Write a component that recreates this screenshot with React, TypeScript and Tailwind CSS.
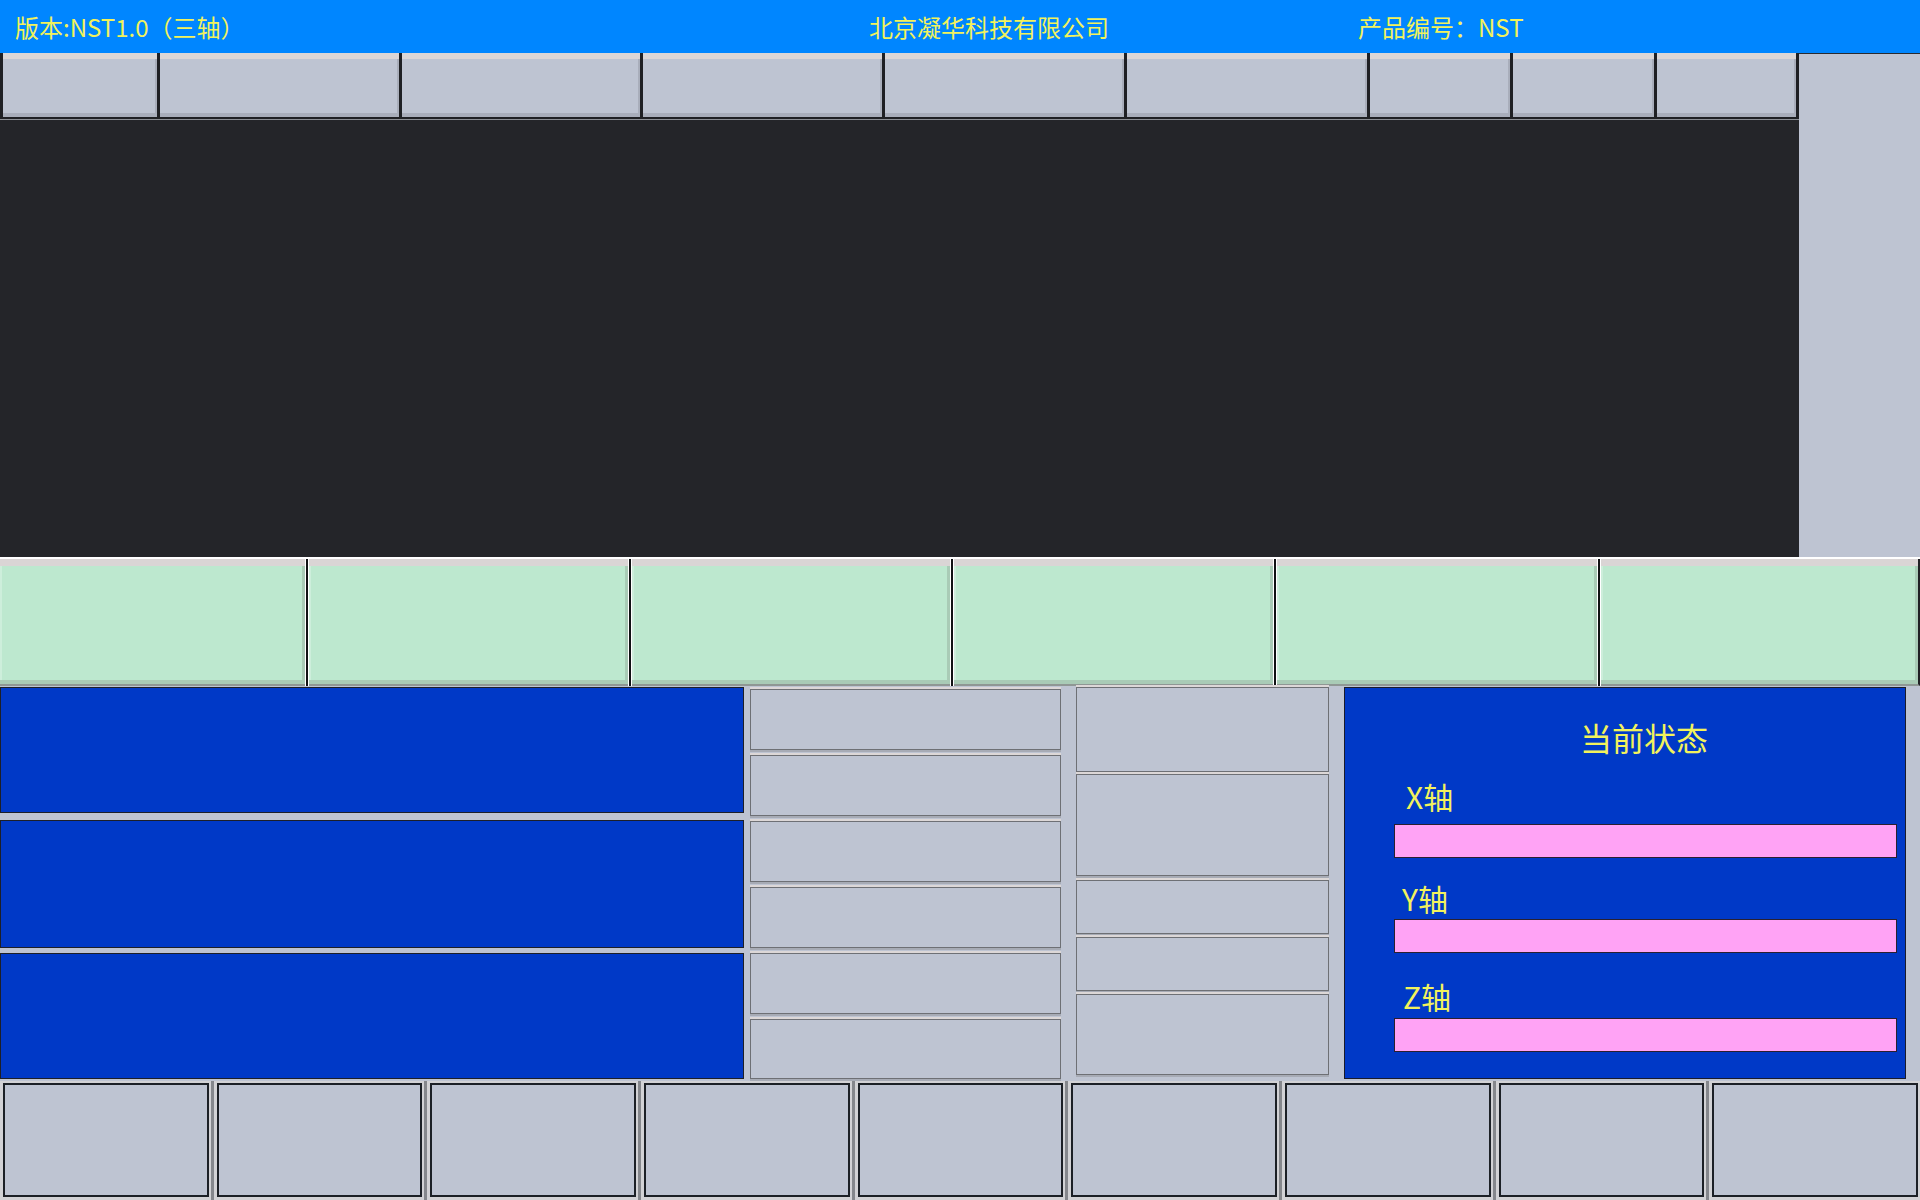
import React from "react";

const FONT = { fontFamily: '"Noto Sans CJK SC", "Noto Sans", sans-serif' };

function TopBtn({ w, last }: { w: number; last?: boolean }) {
  return (
    <div
      className={
        "h-[64px] border-l-[3px] border-l-[#1f2024] bg-[#bec4d2] " + (last ? "border-r-[3px] border-r-[#1f2024]" : "")
      }
      style={{ width: w }}
    >
      <div className="h-full w-full border-t-[6px] border-t-[#dbd6d6] shadow-[inset_-2px_-4px_0_#a9aebb]" />
    </div>
  );
}

function GreenBtn({ w, last }: { w: number; last?: boolean }) {
  return (
    <div
      className={
        "h-full border-b-2 border-b-[#8f9794] bg-[#bde8cf] " + (last ? "border-r-2 border-r-[#1f2024]" : "")
      }
      style={{ width: w }}
    >
      <div className="h-full w-full border-t-[7px] border-t-[#dad5d5] shadow-[inset_-3px_-4px_0_#a9cbb6,inset_2px_0_0_#cdeedb]" />
    </div>
  );
}

function GreenSep() {
  return (
    <div className="flex h-full w-[4px] justify-center bg-white">
      <div className="h-full w-[2px] bg-[#111214]" />
    </div>
  );
}

function MidBtn({ h }: { h: number }) {
  return (
    <div
      className="w-full border border-[#6e7075] bg-[#bec4d2] shadow-[0_-2px_0_#dcd7d7,0_2px_0_#a7abb5]"
      style={{ height: h }}
    />
  );
}

function BottomBtn({ last }: { last?: boolean }) {
  return (
    <div
      className={
        "h-full flex-1 bg-[#d2d2d5] pt-[2px] pb-[3px] pl-[3px] pr-[2px] " +
        (last ? "" : "border-r-[3px] border-r-[#85878c]")
      }
    >
      <div className="h-full w-full border-2 border-[#1c2026] bg-[#bec4d2]" />
    </div>
  );
}

export default function App() {
  const topWidths = [157, 242, 241, 242, 242, 243, 143, 144, 145];
  const greenWidths = [305, 319, 318, 319, 320, 319];
  return (
    <div className="flex h-[1200px] w-[1920px] flex-col overflow-hidden bg-[#bec4d2]" style={FONT}>
      {/* header */}
      <div className="flex h-[53px] items-center bg-[#0086ff] pl-[15px] pt-[1px] text-[24px] leading-none text-[#f2f25c]">
        <span className="w-[854px]">版本:NST1.0（三轴）</span>
        <span className="w-[489px]">北京凝华科技有限公司</span>
        <span>产品编号：NST</span>
      </div>

      {/* top area */}
      <div className="flex h-[504px]">
        <div className="flex w-[1799px] flex-col">
          <div className="flex h-[67px] items-start border-b border-b-[#8c8f95] bg-[#1f2024]">
            {topWidths.map((w, i) => (
              <TopBtn key={i} w={w} last={i === topWidths.length - 1} />
            ))}
          </div>
          <div className="flex-1 bg-[#242529]" />
        </div>
        <div className="flex-1 border-t border-t-[#2a2b30] bg-[#bec4d2]" />
      </div>

      {/* green row */}
      <div className="h-[2px] bg-white" />
      <div className="flex h-[127px] bg-white">
        {greenWidths.map((w, i) => (
          <React.Fragment key={i}>
            {i > 0 && <GreenSep />}
            <GreenBtn w={w} last={i === greenWidths.length - 1} />
          </React.Fragment>
        ))}
      </div>

      {/* lower area */}
      <div className="flex h-[395px] items-start bg-[#bec4d2]">
        {/* left blue panels */}
        <div className="flex w-[744px] flex-col pt-[1px]">
          <div className="h-[126px] border border-[#1d1f28] bg-[#0039c7]" />
          <div className="mt-[7px] h-[128px] border border-[#1d1f28] bg-[#0039c7]" />
          <div className="mt-[5px] h-[126px] border border-[#1d1f28] bg-[#0039c7]" />
        </div>

        {/* middle-left buttons */}
        <div className="ml-[6px] flex w-[311px] flex-col gap-[5px] pt-[3px]">
          <MidBtn h={61} />
          <MidBtn h={61} />
          <MidBtn h={61} />
          <MidBtn h={61} />
          <MidBtn h={61} />
          <MidBtn h={60} />
        </div>

        {/* middle-right buttons */}
        <div className="ml-[15px] flex w-[253px] flex-col pt-[1px]">
          <MidBtn h={85} />
          <div className="h-[2px]" />
          <MidBtn h={102} />
          <div className="h-[4px]" />
          <MidBtn h={54} />
          <div className="h-[3px]" />
          <MidBtn h={54} />
          <div className="h-[3px]" />
          <MidBtn h={81} />
        </div>

        {/* status panel */}
        <div className="ml-[15px] mt-[1px] flex h-[392px] w-[562px] flex-col border border-[#1a1c2a] bg-[#0039c7] text-[#f2f25c]">
          <div className="ml-[38px] mt-[33px] text-center text-[32px] leading-none">当前状态</div>
          <div className="ml-[61px] mt-[28px] text-[30px] leading-none">X轴</div>
          <div className="ml-[49px] mt-[13px] h-[34px] w-[503px] border border-[#2a2030] bg-[#ffa3f5]" />
          <div className="ml-[57px] mt-[25px] text-[30px] leading-none">Y轴</div>
          <div className="ml-[49px] mt-[6px] h-[34px] w-[503px] border border-[#2a2030] bg-[#ffa3f5]" />
          <div className="ml-[58px] mt-[28px] text-[30px] leading-none">Z轴</div>
          <div className="ml-[49px] mt-[7px] h-[34px] w-[503px] border border-[#2a2030] bg-[#ffa3f5]" />
        </div>
      </div>

      {/* bottom row */}
      <div className="flex h-[119px] bg-[#d2d2d5]">
        {Array.from({ length: 9 }).map((_, i) => (
          <BottomBtn key={i} last={i === 8} />
        ))}
      </div>
    </div>
  );
}
